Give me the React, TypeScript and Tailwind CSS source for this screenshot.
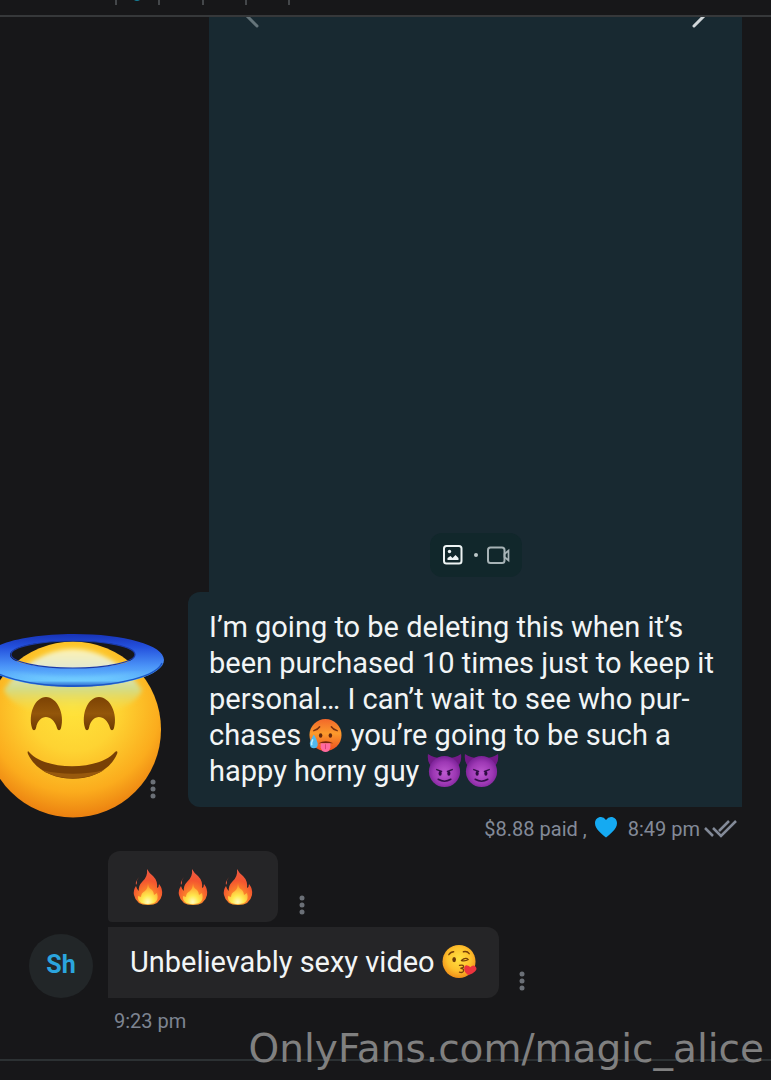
import React from "react";

function HaloSmile() {
  return (
    <svg viewBox="0 0 184 188" className="h-[188px] w-[184px]" role="img" aria-label="Smiling face with halo">
      <defs>
        <radialGradient id="haloFace" cx="0.5" cy="0.36" r="0.66">
          <stop offset="0" stopColor="#ffe53b" />
          <stop offset="0.4" stopColor="#fed332" />
          <stop offset="0.75" stopColor="#fbac1d" />
          <stop offset="1" stopColor="#e97a0e" />
        </radialGradient>
        <linearGradient id="haloRing" x1="0" y1="0" x2="0" y2="1">
          <stop offset="0" stopColor="#1733b8" />
          <stop offset="0.25" stopColor="#2451dd" />
          <stop offset="0.6" stopColor="#4a92f7" />
          <stop offset="0.88" stopColor="#68c3ff" />
          <stop offset="1" stopColor="#1e56c4" />
        </linearGradient>
        <linearGradient id="haloEye" x1="0" y1="0" x2="0" y2="1">
          <stop offset="0" stopColor="#7c4204" />
          <stop offset="0.5" stopColor="#93560a" />
          <stop offset="1" stopColor="#6d3903" />
        </linearGradient>
        <linearGradient id="haloShine" x1="0" y1="0" x2="0" y2="1">
          <stop offset="0" stopColor="#fff2b0" />
          <stop offset="0.3" stopColor="#dfe8d4" />
          <stop offset="0.6" stopColor="#d3dc86" />
          <stop offset="1" stopColor="#ffdf3a" stopOpacity="0" />
        </linearGradient>
        <filter id="haloSoft" x="-0.1" y="-0.1" width="1.2" height="1.2">
          <feGaussianBlur stdDeviation="2" />
        </filter>
      </defs>
      <circle cx="91" cy="97.500" r="88" fill="url(#haloFace)" />
      <path d="M22 58Q50 18 91 17Q132 18 160 58Q150 82 91 84Q32 82 22 58Z" fill="url(#haloShine)" filter="url(#haloSoft)" />
      <path fillRule="evenodd" fill="url(#haloRing)" d="M2 28C2 13 42 2 92 2s90 11 90 26-40 27-90 27S2 43 2 28ZM28 23c0 8 28 13 64 13s61-5 61-13S127 9 91 9s-63 6-63 14Z" />
      <path d="M4 31c5 13 42 23 88 23s83-10 88-23" fill="none" stroke="#1c55c5" strokeWidth="1.500" />
      <ellipse cx="91" cy="22.500" rx="62" ry="13.500" fill="none" stroke="#1b3aa8" strokeWidth="1.200" />
      <path d="M21 40Q92 58 163 40Q92 50 21 40Z" fill="#7fdcff" opacity="0.600" filter="url(#haloSoft)" />
      <path d="M50 96C46 82 53 65 64 65s19 17 15 31c-1 3-3 3-4 0-4-14-18-15-21 0-1 3-3 3-4 0Z" fill="url(#haloEye)" />
      <path d="M103 96C99 82 106 65 117 65s19 17 15 31c-1 3-3 3-4 0-4-14-18-15-21 0-1 3-3 3-4 0Z" fill="url(#haloEye)" />
      <path d="M47 120c16 19 70 19 86 0 2-2 3 0 2 2-14 33-74 33-89 0-1-2 0-4 1-2Z" fill="#784006" />
      <path d="M60 138c18 5 44 5 62 0-16 11-46 11-62 0Z" fill="#98590d" />
    </svg>
  );
}

function HotFace() {
  return (
    <svg viewBox="0 0 36 36" className="inline-block size-[35px] align-[-8px]" role="img" aria-label="Hot face">
      <defs>
        <linearGradient id="hotSkin" x1="0" y1="0" x2="0" y2="1">
          <stop offset="0" stopColor="#f2672a" />
          <stop offset="0.45" stopColor="#fb9a2c" />
          <stop offset="1" stopColor="#ee4d20" />
        </linearGradient>
      </defs>
      <circle cx="18" cy="17.500" r="16.500" fill="url(#hotSkin)" />
      <path d="M6 13Q10 12 12 9M24 9q2 3 6 4" fill="none" stroke="#793010" strokeWidth="1.500" strokeLinecap="round" />
      <ellipse cx="13" cy="18" rx="1.800" ry="2.400" fill="#63270d" />
      <ellipse cx="23" cy="18" rx="1.800" ry="2.400" fill="#63270d" />
      <path d="M11 26q7-4 15 0Z" fill="#74240d" />
      <path d="M13 26h10v4q-1 5-5 5t-5-5Z" fill="#ff6a9f" />
      <path d="M18 27v5" stroke="#db3d79" />
      <path d="M6 17Q1 25 2 27q0 4 4 4t4-4q0-3-4-10Z" fill="#50b9ee" />
      <path d="M5 22q-2 4-1 6" stroke="#b9ecff" strokeWidth="1.500" fill="none" />
    </svg>
  );
}

function Devil() {
  return (
    <svg viewBox="0 0 36 36" className="mr-[2px] inline-block size-[35px] align-[-7px]" role="img" aria-label="Smiling face with horns">
      <defs>
        <radialGradient id="devilSkin" cx="0.5" cy="0.55" r="0.55">
          <stop offset="0" stopColor="#bd59d0" />
          <stop offset="0.65" stopColor="#9d38b4" />
          <stop offset="1" stopColor="#782095" />
        </radialGradient>
      </defs>
      <path d="M1 1Q7 5 14 5L4 13Q0 9 1 1ZM35 1Q29 5 22 5l10 8q4-4 3-12Z" fill="#731a88" />
      <circle cx="18" cy="19" r="16" fill="url(#devilSkin)" />
      <path d="M10 17l5 2M26 17l-5 2" stroke="#35104b" strokeWidth="1.400" strokeLinecap="round" />
      <ellipse cx="13.500" cy="21" rx="1.600" ry="2.400" fill="#2c0b40" />
      <ellipse cx="22.500" cy="21" rx="1.600" ry="2.400" fill="#2c0b40" />
      <path d="M11.500 27q6.500 4 13 0" fill="none" stroke="#35104b" strokeWidth="1.600" strokeLinecap="round" />
    </svg>
  );
}

function Fire() {
  return (
    <svg viewBox="0 0 30 38" className="h-[38px] w-[30px]" role="img" aria-label="Fire">
      <defs>
        <radialGradient id="flame" cx="0.5" cy="0.88" r="0.8">
          <stop offset="0" stopColor="#ffc83c" />
          <stop offset="0.4" stopColor="#fb7f2b" />
          <stop offset="0.7" stopColor="#f4552f" />
          <stop offset="1" stopColor="#ef5a40" />
        </radialGradient>
        <radialGradient id="flameCore" cx="0.5" cy="0.9" r="0.75">
          <stop offset="0" stopColor="#fffac0" />
          <stop offset="0.4" stopColor="#ffe94f" />
          <stop offset="1" stopColor="#ff9c2d" />
        </radialGradient>
      </defs>
      <path d="M14 1q2 4 6 7 5 5 4 12 2-1 2-4 4 5 3 11-2 10-14 10Q3 37 1 27q-1-5 2-9 1 4 3 5-1-5 3-9 6-5 5-13Z" fill="url(#flame)" />
      <path d="M6 9q-4 5-3 8l1-2q-1-2 2-6Z" fill="#f15a3c" />
      <path d="M15 15q0 5 4 7 2 2 2 5l3-2q3 11-9 11Q4 36 5 28l3 1q0-4 4-6 3-3 3-8Z" fill="url(#flameCore)" />
    </svg>
  );
}

function KissFace() {
  return (
    <svg viewBox="0 0 36 36" className="inline-block size-[35px] align-[-7px]" role="img" aria-label="Face blowing a kiss">
      <defs>
        <radialGradient id="kissSkin" cx="0.5" cy="0.42" r="0.6">
          <stop offset="0" stopColor="#ffe141" />
          <stop offset="0.6" stopColor="#fdc02c" />
          <stop offset="1" stopColor="#ef8b17" />
        </radialGradient>
      </defs>
      <circle cx="17.500" cy="18" r="17" fill="url(#kissSkin)" />
      <path d="M7 11q2-3 5-3M22 8q4-1 6 2M20 17q4 1 7-1M20 17q3-3 6-2" fill="none" stroke="#774008" strokeWidth="1.400" strokeLinecap="round" />
      <ellipse cx="12.500" cy="16" rx="1.900" ry="2.700" fill="#6c3a08" />
      <path d="M18 22q5-1 4 2l-3 1q4 0 3 3-1 2-4 1" fill="none" stroke="#79420b" strokeWidth="1.400" strokeLinecap="round" />
      <path d="M27 32c-6-4-5-11-1-10q2 0 3 2 3-3 5-1c4 3-1 7-7 9Z" fill="#ed343d" />
    </svg>
  );
}

function MoreButton({ className }: { className: string }) {
  return (
    <button type="button" aria-label="Message options" className={className}>
      <svg viewBox="0 0 8 22" className="h-[22px] w-2" fill="#6b7077">
        <circle cx="4" cy="4" r="2.500" />
        <circle cx="4" cy="11" r="2.500" />
        <circle cx="4" cy="18" r="2.500" />
      </svg>
    </button>
  );
}

export default function App() {
  return (
    <div className="relative flex min-h-screen flex-col overflow-hidden bg-[#171719] font-['Roboto',sans-serif] text-[#f2f5f6]">
      <header className="h-[17px] border-b-2 border-[#36383a]">
        <svg viewBox="0 0 180 6" className="ml-[115px] h-[6px] w-[180px]" aria-hidden="true">
          <path d="M1 0v5M44 0v5M88 0v5M131 0v5M174 0v5" stroke="#54585b" strokeWidth="1.500" />
          <path d="M19 0h6q-3 2-6 0Z" fill="#168099" />
        </svg>
      </header>

      <main className="flex flex-1 flex-col">
        <section className="ml-[209px] mr-[29px] flex h-[575px] flex-col justify-between bg-[#182931]" aria-label="Media">
          <div className="flex items-start justify-between px-[34px]">
            <button type="button" aria-label="Previous" className="h-[18px] w-5">
              <svg viewBox="0 0 20 18" className="h-[18px] w-5">
                <path d="M4-1l10 10" stroke="#65747a" strokeWidth="3" strokeLinecap="round" />
              </svg>
            </button>
            <button type="button" aria-label="Next" className="h-[18px] w-5">
              <svg viewBox="0 0 20 18" className="h-[18px] w-5">
                <path d="M16-1L6 9" stroke="#d1d7da" strokeWidth="3" strokeLinecap="round" />
              </svg>
            </button>
          </div>
          <div className="mb-[15px] flex h-11 w-[92px] items-center justify-center self-center rounded-xl bg-[#11272b]">
            <svg viewBox="0 0 68 24" className="h-6 w-[68px]" role="img" aria-label="Photo and video">
              <rect x="2" y="3" width="17.500" height="17.500" rx="2.500" fill="none" stroke="#eef4f4" strokeWidth="2" />
              <circle cx="7.500" cy="8.500" r="1.700" fill="#eef4f4" />
              <path d="M5.500 17v-2l3-2 2 2 3-3 3 3v2Z" fill="#eef4f4" />
              <circle cx="34" cy="12" r="2" fill="#bdc8c9" />
              <rect x="46" y="4.500" width="16.500" height="15.500" rx="2.500" fill="none" stroke="#a7b3b6" strokeWidth="2" />
              <path d="M62.500 11l4-3.500v10l-4-3.500Z" fill="none" stroke="#a7b3b6" strokeWidth="1.700" />
            </svg>
          </div>
        </section>

        <section className="relative flex items-end justify-end pr-[29px]">
          <div className="absolute -left-[18px] top-10">
            <HaloSmile />
          </div>
          <MoreButton className="relative mb-[7px] mr-[31px]" />
          <div className="min-w-0 max-w-[554px] flex-1 rounded-l-xl bg-[#182931] pb-[18px] pl-[21px] pr-5 pt-[17px] text-[29px] leading-9">
            <p>
              I’m going to be deleting this when it’s
              <br />
              been purchased 10 times just to keep it
              <br />
              personal… I can’t wait to see who pur-
              <br />
              chases <HotFace /> you’re going to be such a
              <br />
              happy horny guy <Devil />
              <Devil />
            </p>
          </div>
        </section>

        <div className="flex h-11 items-center justify-end gap-2 pr-[33px] text-[20px] leading-6 text-[#838a98]">
          <span>$8.88 paid ,</span>
          <svg viewBox="0 0 22 21" className="mb-1 h-[21px] w-[22px]" role="img" aria-label="Liked">
            <path d="M11 20.500C7 17 0 12 0 6.200 0 2.500 2.600 0 6 0q3 0 5 3 2-3 5-3c3.400 0 6 2.500 6 6.200C22 12 15 17 11 20.500Z" fill="#15aaf2" />
          </svg>
          <div className="flex items-center gap-1 pl-[3px]">
            <span>8:49 pm</span>
            <svg viewBox="0 0 34 20" className="h-5 w-[34px]" role="img" aria-label="Read" fill="none" stroke="#838a98" strokeWidth="2.500">
              <path d="M1 9l8 8M9 9l8 8L32 2M15 12L25 2" />
            </svg>
          </div>
        </div>

        <div className="ml-[108px] flex items-end">
          <div className="flex h-[71px] items-center gap-[15px] rounded-xl rounded-bl-sm bg-[#252527] px-[25px]">
            <Fire />
            <Fire />
            <Fire />
          </div>
          <MoreButton className="mb-[6px] ml-5" />
        </div>

        <div className="mt-[5px] flex items-end pl-[29px]">
          <div className="mr-[15px] flex size-16 items-center justify-center rounded-full bg-[#222628] pb-[2px] text-[25px] font-bold text-[#2ba5de]">Sh</div>
          <div className="flex h-[71px] items-center rounded-r-xl bg-[#252527] pb-[2px] pl-[22px] pr-[22px] text-[29px] leading-9">
            <p className="whitespace-nowrap">Unbelievably sexy video <KissFace /></p>
          </div>
          <MoreButton className="mb-[6px] ml-[19px]" />
        </div>
        <time className="ml-[114px] mt-[11px] text-[20px] leading-6 text-[#7d8491]">9:23 pm</time>
      </main>
      <footer className="h-[21px] border-t-2 border-[#2c3133]" />
      <a href="#magic_alice" className="absolute bottom-[7px] right-[7px] font-['DejaVu_Sans',sans-serif] text-[39px] leading-[48px] text-[#808080]">
        OnlyFans.com/magic_alice
      </a>
    </div>
  );
}
